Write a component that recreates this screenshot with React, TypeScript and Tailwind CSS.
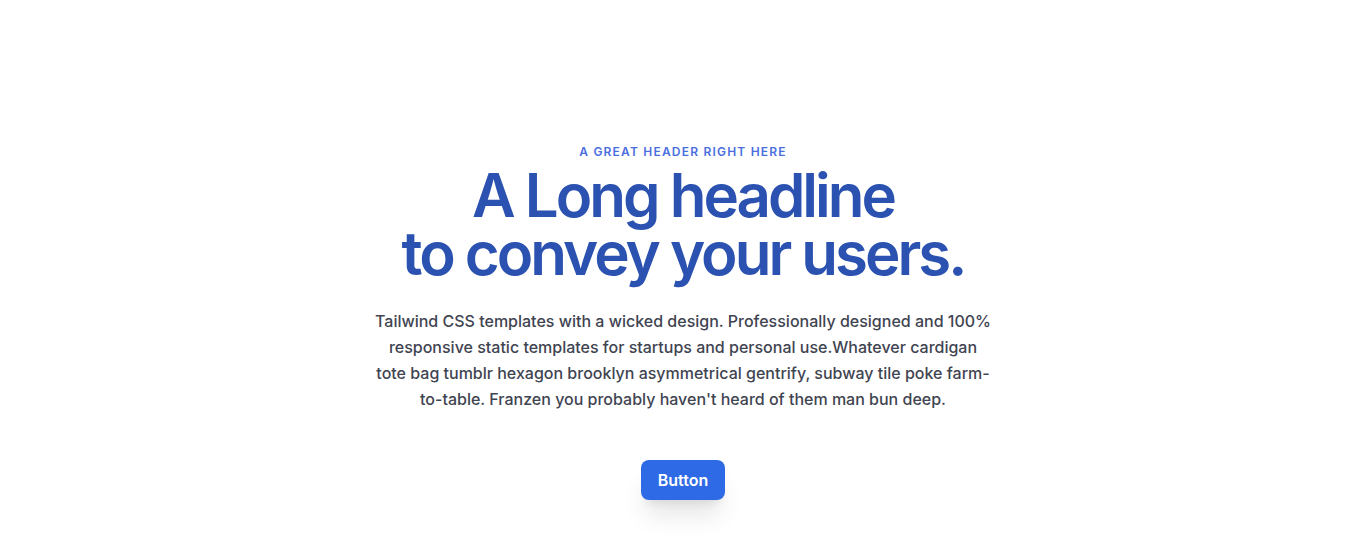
export default function App() {
  return (
    <section className="w-full min-h-[557px] bg-white" style={{ fontFamily: "Inter, 'Noto Sans', sans-serif" }}>
      <div className="flex flex-col items-center text-center px-6 pt-[144px]">
        <p className="text-xs leading-4 font-semibold tracking-widest uppercase text-[#4a6ee0]">
          A great header right here
        </p>
        <h1 className="mt-[6px] text-6xl leading-[58px] font-semibold tracking-tighter text-[#2b52b0]">
          A Long headline
          <br />
          to convey your users.
        </h1>
        <p className="mt-[26px] max-w-[620px] text-base leading-relaxed font-medium text-[#3f4451]">
          Tailwind CSS templates with a wicked design. Professionally designed and 100% responsive static templates for
          startups and personal use.Whatever cardigan tote bag tumblr hexagon brooklyn asymmetrical gentrify, subway
          tile poke farm-to-table. Franzen you probably haven't heard of them man bun deep.
        </p>
        <button className="mt-12 px-[17px] py-2 rounded-lg bg-[#2f6ae6] text-white text-base leading-6 font-semibold shadow-xl">
          Button
        </button>
      </div>
    </section>
  );
}
